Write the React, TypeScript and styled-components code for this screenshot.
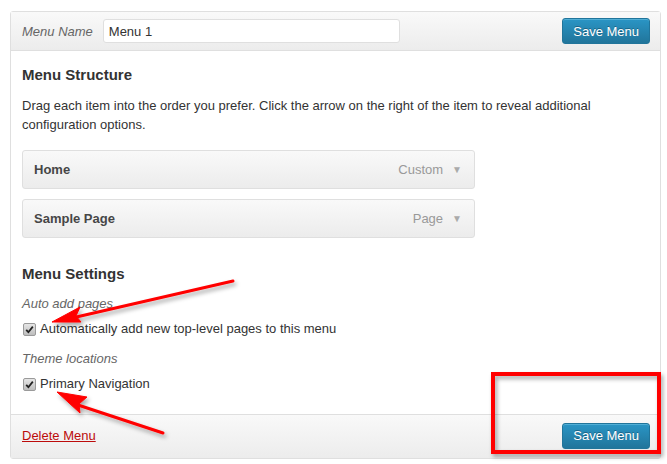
import React from 'react';
import styled, { createGlobalStyle } from 'styled-components';

const GlobalStyle = createGlobalStyle`
  html, body {
    margin: 0;
    padding: 0;
    background: #fff;
    font-family: "Liberation Sans", Arial, sans-serif;
    font-size: 13px;
    color: #333;
  }
`;

const Page = styled.div`
  position: relative;
  width: 667px;
  height: 464px;
  padding: 11px 0 0 10px;
  box-sizing: border-box;
  overflow: hidden;
`;

const Panel = styled.div`
  width: 651px;
  border: 1px solid #dfdfdf;
  border-radius: 3px;
  background: #fff;
  box-sizing: border-box;
`;

const Bar = styled.div<{ $bottom?: boolean }>`
  display: flex;
  align-items: center;
  justify-content: space-between;
  height: ${(p) => (p.$bottom ? '41px' : '38px')};
  padding: ${(p) => (p.$bottom ? '0 10px 2px 11px' : '0 10px 0 11px')};
  background: linear-gradient(to bottom, #f9f9f9, #ececec);
  ${(p) => (p.$bottom ? 'border-top: 1px solid #dfdfdf;' : 'border-bottom: 1px solid #dfdfdf;')}
`;

const NameLabel = styled.label`
  display: flex;
  align-items: center;
  gap: 10px;
  font-style: italic;
  color: #666;
`;

const NameInput = styled.input`
  width: 297px;
  height: 24px;
  box-sizing: border-box;
  border: 1px solid #dfdfdf;
  border-radius: 3px;
  padding: 0 5px;
  font-family: inherit;
  font-size: 13px;
  color: #333;
  background: #fff;
`;

const SaveButton = styled.button`
  height: 26px;
  padding: 0 10px;
  border: 1px solid #21759b;
  border-radius: 3px;
  background: linear-gradient(to bottom, #2a95c5, #21759b);
  color: #fff;
  font-family: inherit;
  font-size: 13px;
  text-shadow: 0 -1px 0 rgba(0, 0, 0, 0.3);
  box-shadow: inset 0 1px 0 rgba(120, 200, 230, 0.5);
`;

const Body = styled.div`
  padding: 14px 10px 9px 11px;
`;

const Heading = styled.h3`
  margin: 0 0 12px;
  font-size: 15px;
  font-weight: bold;
  color: #333;
  line-height: 19px;
`;

const Description = styled.p`
  margin: 0 0 16px;
  line-height: 19px;
  color: #333;
`;

const ItemList = styled.ul`
  list-style: none;
  margin: 0 0 26px;
  padding: 0;
  display: flex;
  flex-direction: column;
  gap: 10px;
`;

const Item = styled.li`
  display: flex;
  align-items: center;
  justify-content: space-between;
  width: 453px;
  height: 39px;
  box-sizing: border-box;
  padding: 0 12px 0 11px;
  border: 1px solid #dfdfdf;
  border-radius: 3px;
  background: linear-gradient(to bottom, #f9f9f9, #ececec);
`;

const ItemTitle = styled.span`
  font-weight: bold;
  color: #464646;
`;

const ItemType = styled.span`
  display: flex;
  align-items: center;
  gap: 9px;
  color: #999;
`;

const Caret = styled.span`
  font-size: 10px;
  color: #aaa;
`;

const FieldLabel = styled.div`
  font-style: italic;
  color: #666;
  line-height: 18px;
  margin-top: 5px;
`;

const CheckRow = styled.label`
  display: flex;
  align-items: center;
  gap: 4px;
  line-height: 18px;
  margin: 7px 0 12px;
  color: #333;
`;

const Check = styled.span`
  display: inline-flex;
  align-items: center;
  justify-content: center;
  width: 11px;
  height: 11px;
  border: 1px solid #9a9a9a;
  border-radius: 2px;
  background: linear-gradient(to bottom, #e6e6e6, #bdbdbd);
  margin: 0 0 0 1px;
`;

const DeleteLink = styled.a`
  color: #bc0b0b;
  text-decoration: underline;
`;

const Overlay = styled.svg`
  position: absolute;
  left: 0;
  top: 0;
  pointer-events: none;
`;

const CheckMark = () => (
  <svg width="9" height="9" viewBox="0 0 9 9">
    <path d="M1.2 4.8 L3.4 7.2 L7.8 1.6" fill="none" stroke="#222" strokeWidth="1.8" />
  </svg>
);

const items = [
  { title: 'Home', type: 'Custom' },
  { title: 'Sample Page', type: 'Page' },
];

const App: React.FC = () => (
  <Page>
    <GlobalStyle />
    <Panel>
      <Bar>
        <NameLabel>
          Menu Name
          <NameInput defaultValue="Menu 1" />
        </NameLabel>
        <SaveButton>Save Menu</SaveButton>
      </Bar>
      <Body>
        <Heading>Menu Structure</Heading>
        <Description>
          Drag each item into the order you prefer. Click the arrow on the right of the item to reveal additional
          configuration options.
        </Description>
        <ItemList>
          {items.map((item) => (
            <Item key={item.title}>
              <ItemTitle>{item.title}</ItemTitle>
              <ItemType>
                {item.type}
                <Caret>▼</Caret>
              </ItemType>
            </Item>
          ))}
        </ItemList>
        <Heading>Menu Settings</Heading>
        <FieldLabel>Auto add pages</FieldLabel>
        <CheckRow>
          <Check>
            <CheckMark />
          </Check>
          Automatically add new top-level pages to this menu
        </CheckRow>
        <FieldLabel>Theme locations</FieldLabel>
        <CheckRow>
          <Check>
            <CheckMark />
          </Check>
          Primary Navigation
        </CheckRow>
      </Body>
      <Bar $bottom>
        <DeleteLink href="#">Delete Menu</DeleteLink>
        <SaveButton>Save Menu</SaveButton>
      </Bar>
    </Panel>
    <Overlay width="667" height="464">
      <defs>
        <filter id="sh" x="-20%" y="-20%" width="140%" height="140%">
          <feDropShadow dx="2" dy="3" stdDeviation="2" floodColor="#000" floodOpacity="0.35" />
        </filter>
      </defs>
      <g filter="url(#sh)" fill="#f00" stroke="#f00">
        <rect x="493" y="374" width="166" height="78" fill="none" strokeWidth="4" />
        <path d="M233 281 L72 318" strokeWidth="3" strokeLinecap="round" />
        <path d="M52 322 L80 307 L76 316 L81 322 Z" strokeWidth="1" />
        <path d="M163 433 L78 405" strokeWidth="3" strokeLinecap="round" />
        <path d="M57 392 L87 397 L79 404 L80 413 Z" strokeWidth="1" />
      </g>
    </Overlay>
  </Page>
);

export default App;
